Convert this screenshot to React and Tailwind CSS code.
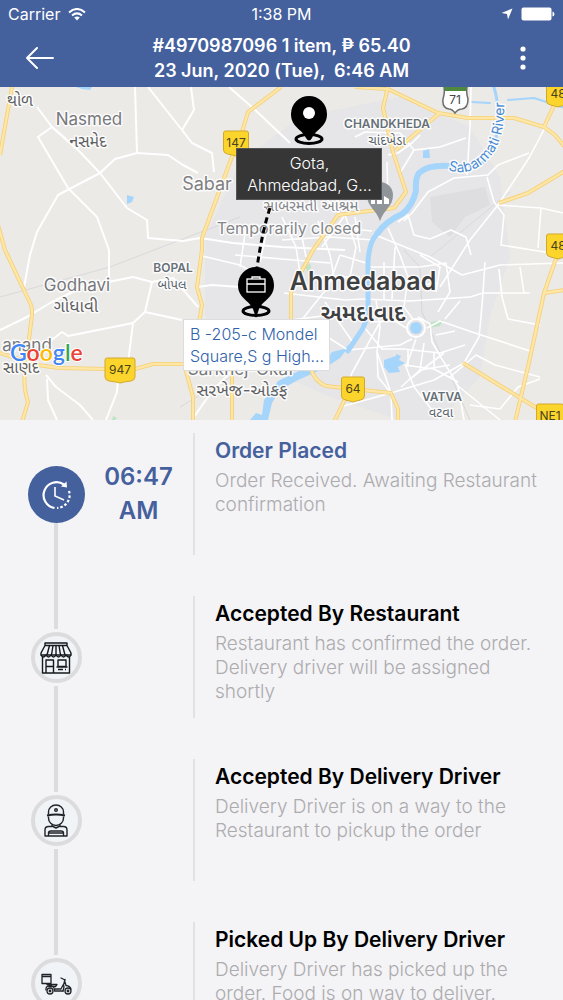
import React from "react";

const FONT = "font-['Inter','Noto_Sans','Liberation_Sans',sans-serif]";

const STEPS = [
  {
    title: "Order Placed",
    text: "Order Received. Awaiting Restaurant confirmation",
    time: "06:47 AM",
    icon: "clock",
    active: true,
  },
  {
    title: "Accepted By Restaurant",
    text: "Restaurant has confirmed the order. Delivery driver will be assigned shortly",
    icon: "store",
  },
  {
    title: "Accepted By Delivery Driver",
    text: "Delivery Driver is on a way to the Restaurant to pickup the order",
    icon: "driver",
  },
  {
    title: "Picked Up By Delivery Driver",
    text: "Delivery Driver has picked up the order. Food is on way to deliver.",
    icon: "scooter",
  },
];

const MINOR_ROADS = [
  "M37 20L52 40L80 65L100 86L127 121L147 133L148 151L183 154L200 151L233 156L282 160L345 163",
  "M66 52L52 40L38 50L68 101L97 130L109 163L109 190",
  "M24 200L30 168L37 145L58 108L100 86L115 72L137 66L168 68L183 78L198 86",
  "M137 66L135 0",
  "M148 0L182 43L192 56L212 66L214 85",
  "M191 0L194 23L182 43",
  "M229 0L253 21L290 56",
  "M0 243L27 230L50 216L83 200L113 194L133 190L152 195L145 225L133 236L128 276",
  "M45 258L62 245L68 249L133 236M145 225L182 233",
  "M152 195L173 191L198 220M197 200L212 198L240 200",
  "M46 288L56 300L80 318L93 333M47 292L48 313L57 333",
  "M118 290L117 305L106 333M232 284L212 304L194 330",
];

const CITY_ROADS = [
  "M471 0L470 40L467 88M548 35L529 71L498 118L470 153L440 200",
  "M404 134L412 126L428 105L454 91L488 88L498 78L529 66",
  "M487 90L494 115L504 128L501 158L563 168M498 118L541 121L563 126M541 121L538 161",
  "M398 135L408 128L414 148L430 152L451 143L466 150L471 168",
  "M355 50L365 45L400 46L414 63L440 60L466 51",
  "M388 68L398 66L412 56L420 48M414 63L400 86M387 75L388 112",
  "M388 141L400 168L408 190L404 220L413 232",
  "M375 148L430 170L462 188L500 178L563 176",
  "M370 180L420 180L446 176L450 205L438 225",
  "M363 212L410 214L470 210L483 206L530 206",
  "M483 206L485 175M483 206L481 230L479 250L464 276L434 293L391 306L340 320",
  "M370 235L395 234L406 241M427 241L440 234L475 246L530 264",
  "M364 240L382 262L403 262L440 266L465 258",
  "M348 263L400 258L412 252M376 213L380 240L377 265L391 306",
  "M416 252L406 280L414 300L440 333",
  "M418 230L430 237L432 255L458 299L464 333",
  "M404 278L434 282L458 295M434 282L434 266M450 290L476 268L495 278L540 290",
  "M404 228L380 235L352 286L342 310M458 299L500 333",
  "M392 333L391 306L378 290L377 265M470 318L500 322L518 300L540 292",
  "M499 182L502 210L508 232L540 238M520 180L524 206",
  "M410 292L444 266M401 300L420 283L450 278",
  "M284 206L310 209L345 213L363 212M291 233L322 229L360 222",
  "M318 244L348 263M325 215L352 254M300 235L328 200L340 168",
  "M235 168L282 172L330 176M240 180L246 140M260 175L268 138L300 140",
  "M282 130L296 160L300 186M300 140L306 170M318 134L330 168L334 190M282 153L330 150L374 153",
  "M322 160L345 128L356 160L350 190M330 140L372 144M340 168L366 176M308 190L360 190",
  "M355 130L360 165M202 169L240 178L260 190M312 100L318 125M325 110L342 130M322 75L330 105L345 122",
  "M420 168L440 180L436 205M395 160L392 212M384 175L384 212M406 200L438 196",
  "M408 262L408 280M424 256L420 283M436 248L455 244M445 232L460 214",
];

const HIGHWAYS = [
  "M12 0L0 68",
  "M-2 138L5 163L31 218Q33 224 31 236L25 283Q23 300 28 315L22 335",
  "M281 0L248 25L242 45L230 75L202 151V163L197 200L202 218L200 230L186 265L186 284L193 310V335",
  "M232 270V335",
  "M0 266L37 278L60 281L107 282L135 282L153 277L185 277",
  "M388 0L383 21L393 65L406 105L394 121L361 125L338 128L326 145L313 163L296 195L291 206L291 233",
  "M355 0L388 2L438 26L468 31L514 31L544 40L555 48L565 60M544 40L556 14M441 25L396 63",
  "M499 116L528 106L565 84",
  "M558 166L544 206L528 280L515 335M544 206L565 203",
  "M310 280Q315 295 326 299L344 301L391 306L398 322V335M345 312L334 335",
  "M463 276L540 323",
];

const LABELS = [
  { t: "થોળ", x: 20, y: 19, s: 16, c: "#5f6062" },
  { t: "Nasmed", x: 89, y: 38, s: 17, c: "#77787b" },
  { t: "નસમેદ", x: 88, y: 60, s: 16, c: "#5f6062" },
  { t: "Sabar", x: 207, y: 103, s: 18, c: "#7f8083" },
  { t: "સાબરમતી આશ્રમ", x: 311, y: 124, s: 15, c: "#85868a" },
  { t: "Temporarily closed", x: 289, y: 147, s: 16, c: "#85868a" },
  { t: "CHANDKHEDA", x: 387, y: 41, s: 12, c: "#667078", w: 600 },
  { t: "ચાંદખેડા", x: 387, y: 58, s: 13, c: "#59636b" },
  { t: "Godhavi", x: 77, y: 204, s: 17, c: "#77787b" },
  { t: "ગોધાવી", x: 76, y: 225, s: 17, c: "#5f6062" },
  { t: "BOPAL", x: 173, y: 185, s: 12, c: "#667078", w: 600 },
  { t: "બોપલ", x: 172, y: 202, s: 13, c: "#59636b" },
  { t: "anand", x: 27, y: 264, s: 17, c: "#77787b" },
  { t: "સાણંદ", x: 21, y: 286, s: 16, c: "#5f6062" },
  { t: "Sarkhej-Okaf", x: 241, y: 288, s: 17, c: "#77787b" },
  { t: "સરખેજ-ઓકફ", x: 242, y: 309, s: 17, c: "#5f6062" },
  { t: "Ahmedabad", x: 363, y: 203, s: 25, c: "#3f4042", w: 600 },
  { t: "અમદાવાદ", x: 363, y: 234, s: 23, c: "#3f4042", w: 600 },
  { t: "VATVA", x: 442, y: 314, s: 12, c: "#667078", w: 600 },
  { t: "વટવા", x: 441, y: 330, s: 13, c: "#59636b" },
];

const SHIELDS = [
  { t: "147", x: 236, y: 56, w: 25 },
  { t: "947", x: 120, y: 283, w: 30 },
  { t: "64", x: 353, y: 302, w: 23 },
  { t: "48", x: 558, y: 7, w: 23 },
  { t: "48", x: 558, y: 159, w: 23 },
  { t: "NE1", x: 550, y: 329, w: 27 },
];

const MapCanvas = () => (
  <svg
    className="block h-full w-full"
    viewBox="0 0 563 333"
    preserveAspectRatio="xMidYMid slice"
    role="img"
    aria-label="Map of Ahmedabad"
  >
    <rect width="563" height="333" fill="#ebeae7" />
    <path
      d="M240 75L300 30L400 10L470 40L500 90L510 170L490 230L480 290L440 333H400L330 310L240 270L205 230V150Z"
      fill="#e6e6e8"
    />
    <path d="M430 110L485 100L490 118L465 130L450 150L432 135Z" fill="#dedee0" />
    <path d="M404 163L420 180L422 225L440 265L470 333" fill="none" stroke="#d6d6d8" strokeWidth="1" />
    <path d="M0 210L110 180L240 130M180 320L290 255M510 105L430 170" fill="none" stroke="#d9d9da" strokeWidth="1" />
    <path d="M431 235L443 233L440 239L428 241Z" fill="#bfe3c5" />
    <path d="M305 180L310 176L311 181L308 185Z" fill="#bfe3c5" />
    <path d="M113 329L117 331L115 333H112Z" fill="#bfe3c5" />

    <g fill="#a5d5fb">
      <path d="M127 108L134 110L132 115L127 117Z" />
      <path d="M76 0H92L90 3L82 2Z" />
      <path d="M423 64L429 62L430 71L423 71Z" />
      <path d="M384 273L396 269V267L401 269L399 273L405 276L398 280L400 285L389 286L384 280Z" />
      <path d="M278 294L305 281L326 274L332 265L344 262L354 253L340 271L325 281L298 293L280 303L272 316L268 333H250L256 326L262 328L264 313L274 300Z" />
    </g>
    <g fill="none" stroke="#a5d5fb" strokeLinecap="round" strokeLinejoin="round">
      <path d="M494 0Q501 25 497 45Q494 68 478 79L448 79" strokeWidth="3" />
      <path d="M452 79Q428 77 419 86Q415 92 416 104Q412 120 402 127Q386 134 377 147" strokeWidth="6" />
      <path d="M471 15L490 16M508 13L534 11L565 21" strokeWidth="2" />
    </g>

    <g fill="none" stroke="#ffffff" strokeLinejoin="round">
      {MINOR_ROADS.map((d) => (
        <path key={d} d={d} strokeWidth="2" />
      ))}
      {CITY_ROADS.map((d) => (
        <path key={d} d={d} strokeWidth="1.6" />
      ))}
    </g>
    <path
      d="M377 147Q369 155 368 175V210Q369 228 363 241L348 264"
      fill="none"
      stroke="#a5d5fb"
      strokeWidth="5"
      strokeLinecap="round"
    />
    <circle cx="416" cy="241" r="9" fill="#e6e6e8" stroke="#fff" strokeWidth="2" />
    <circle cx="416" cy="241" r="6" fill="#a5d5fb" />

    <g fill="none" strokeLinejoin="round">
      {HIGHWAYS.map((d) => (
        <path key={d} d={d} stroke="#f5cf75" strokeWidth="4" />
      ))}
      {HIGHWAYS.map((d) => (
        <path key={d} d={d} stroke="#fde6a6" strokeWidth="2.4" />
      ))}
    </g>

    {/* ashram poi pin */}
    <path d="M380 134C376 122 367 120 367 108A13 13 0 0 1 393 108C393 120 384 122 380 134Z" fill="#8f9599" />
    <path d="M371 117V110L375 112V117ZM377 117V108L382 110V117ZM384 117V109L389 112V117Z" fill="#fff" />

    <g
      className="[paint-order:stroke] font-['Inter','Noto_Sans','Noto_Sans_Gujarati',sans-serif]"
      textAnchor="middle"
      stroke="#ffffff"
      strokeWidth="3"
      strokeLinejoin="round"
      strokeOpacity="0.85"
    >
      {LABELS.map((l) => (
        <text key={l.t} x={l.x} y={l.y} fontSize={l.s} fill={l.c} fontWeight={l.w || 400}>
          {l.t}
        </text>
      ))}
      <path id="river" d="M448 83Q468 90 485 75Q502 60 504 30L505 -6" fill="none" stroke="none" />
      <text fontSize="14" fill="#4a8ad0" textAnchor="start">
        <textPath href="#river">Sabarmati River</textPath>
      </text>
    </g>

    <g className="font-['Inter','Liberation_Sans',sans-serif]" textAnchor="middle" fontSize="12">
      {SHIELDS.map((s) => (
        <g key={`${s.t}-${s.y}`} transform={`translate(${s.x} ${s.y})`}>
          <path
            d={`M${-s.w / 2} -10Q${-s.w / 2} -12 ${-s.w / 2 + 2} -12H${s.w / 2 - 2}Q${s.w / 2} -12 ${s.w / 2} -10V7Q${s.w / 2} 10 ${s.w / 2 - 4} 11Q3 12 0 13Q-3 12 ${-s.w / 2 + 4} 11Q${-s.w / 2} 10 ${-s.w / 2} 7Z`}
            fill="#fbd52b"
            stroke="#d3a92c"
          />
          <text y="4" fill="#4b421f">
            {s.t}
          </text>
        </g>
      ))}
      <path
        d="M444 0H467Q466 6 468 12Q468 21 462 22Q458 22 455 26Q452 22 449 22Q442 21 443 12Q445 6 444 0Z"
        fill="#fff"
        stroke="#6d6d6d"
        strokeWidth="1.5"
      />
      <path d="M444 0H467L466 4H445Z" fill="#4d8a3d" />
      <text x="455" y="17" fill="#444">
        71
      </text>
    </g>

    <path d="M270 121Q262 145 257 181" fill="none" stroke="#000" strokeWidth="3" strokeDasharray="6 4" />
    <g>
      <ellipse cx="309" cy="52" rx="13" ry="4.500" fill="none" stroke="#000" strokeWidth="3" />
      <path d="M309 9A18 18 0 0 1 327 27C327 40 316 42 312 51Q309 56 306 51C302 42 291 40 291 27A18 18 0 0 1 309 9Z" />
      <circle cx="309" cy="26" r="6" fill="#fff" />
    </g>
    <g>
      <ellipse cx="256" cy="224" rx="13" ry="4.500" fill="none" stroke="#000" strokeWidth="3" />
      <path d="M256 180A18 18 0 0 1 274 198C274 211 263 213 259 222L256 231L253 222C249 213 238 211 238 198A18 18 0 0 1 256 180Z" />
      <g fill="none" stroke="#fff" strokeWidth="1.300">
        <rect x="247" y="192" width="18" height="13" />
        <path d="M247 197H265M252 192V190H260V192" />
      </g>
    </g>

    <text
      x="10"
      y="274"
      fontSize="23"
      fontWeight="600"
      stroke="#fff"
      strokeWidth="2"
      className="[paint-order:stroke] font-['Lato','Inter',sans-serif]"
    >
      <tspan fill="#4285f4">G</tspan>
      <tspan fill="#ea4335">o</tspan>
      <tspan fill="#fbbc05">o</tspan>
      <tspan fill="#4285f4">g</tspan>
      <tspan fill="#34a853">l</tspan>
      <tspan fill="#ea4335">e</tspan>
    </text>
  </svg>
);

const StatusBar = () => (
  <div className="grid h-7 grid-cols-3 items-center px-2 text-base">
    <div className="flex items-center gap-2">
      <span>Carrier</span>
      <svg width="18" height="13" viewBox="0 0 18 13" fill="none" stroke="#fff" strokeWidth="2">
        <path d="M1 4.500Q9 -2.500 17 4.500M4 7.500Q9 3.200 14 7.500" />
        <path d="M9 12.500L6.200 9.600Q9 7.400 11.800 9.600Z" fill="#fff" stroke="none" />
      </svg>
    </div>
    <span className="text-center">1:38 PM</span>
    <div className="flex items-center justify-end gap-2">
      <svg width="12" height="12" viewBox="0 0 12 12" fill="#fff">
        <path d="M11.500 0.500L7 11.500L6 6L0.500 5Z" />
      </svg>
      <svg width="34" height="14" viewBox="0 0 34 14" fill="#fff">
        <rect x="0.500" y="0.500" width="30" height="13" rx="2" />
        <path d="M31.500 4.500Q33.500 5 33.500 7Q33.500 9 31.500 9.500Z" />
      </svg>
    </div>
  </div>
);

const Header = () => (
  <header className="shrink-0 bg-[#44609d] text-white">
    <StatusBar />
    <div className="flex h-[59px] items-center justify-between px-6">
      <button type="button" aria-label="Back" className="flex h-8 w-8 items-center justify-center">
        <svg width="28" height="22" viewBox="0 0 28 22" fill="none" stroke="#fff" strokeWidth="2" strokeLinecap="round" strokeLinejoin="round">
          <path d="M27 11H1M11 1L1 11L11 21" />
        </svg>
      </button>
      <h1 className="text-center text-lg leading-[25px] font-semibold whitespace-pre">
        #4970987096 1 item, ₱ 65.40
        <br />
        {"23 Jun, 2020 (Tue),  6:46 AM"}
      </h1>
      <button type="button" aria-label="More options" className="flex h-8 w-8 items-center justify-center">
        <svg width="6" height="24" viewBox="0 0 6 24" fill="#fff">
          <circle cx="3" cy="3" r="2.600" />
          <circle cx="3" cy="12" r="2.600" />
          <circle cx="3" cy="21" r="2.600" />
        </svg>
      </button>
    </div>
  </header>
);

const StepIcon = ({ name }) => {
  if (name === "clock") {
    return (
      <svg width="30" height="30" viewBox="0 0 30 30" fill="none" stroke="#fff" strokeWidth="2.200">
        <path d="M13.500 28A13 13 0 1 1 23 4.500" />
        <path d="M25.500 1.500L26 7.500L20 6.500Z" fill="#fff" stroke="none" />
        <path d="M14 7V16L23 20" strokeWidth="1.600" />
        <path d="M28 11A13 13 0 0 1 16 28" strokeDasharray="2.500 2" />
      </svg>
    );
  }
  if (name === "store") {
    return (
      <svg width="32" height="32" viewBox="0 0 32 32" fill="none" stroke="#15181c" strokeWidth="1.400" strokeLinejoin="round">
        <path d="M5 1H27V3.500H5ZM5 3.500L1 11V13H31V11L27 3.500" />
        <path d="M9.500 3.500L7 13M13 3.500L11.500 13M16 3.500V13M19 3.500L20.500 13M22.500 3.500L25 13" />
        <path d="M1 13Q3 17 6 13Q8.500 17 11 13Q13.500 17 16 13Q18.500 17 21 13Q23.500 17 26 13Q29 17 31 13" />
        <path d="M2.500 15V31H29.500V15M6 31V18H13.500V31M6 24.500H13.500" />
        <path d="M18 18H26V24.500H18ZM16.500 25H27.500" />
        <path d="M18 27.500H23M25 27.500H26" />
      </svg>
    );
  }
  if (name === "driver") {
    return (
      <svg width="24" height="33" viewBox="0 0 24 33" fill="none" stroke="#20242a" strokeWidth="1.400" strokeLinejoin="round">
        <path d="M4.500 10.500V8A7.500 7 0 0 1 19.500 8V10.500" />
        <path d="M3 11.500Q12 9.500 21 11.500" strokeWidth="2" />
        <path d="M4.500 12.500V14A7.500 7.500 0 0 0 19.500 14V12.500" />
        <circle cx="12" cy="6" r="1.300" />
        <path d="M8 20.500V22L12 24L16 22V20.500" />
        <path d="M8 22.500H4.500Q1 22.500 1 26V32H23V26Q23 22.500 19.500 22.500H16" />
        <path d="M4.500 32V29Q4.500 27 7 27H17Q19.500 27 19.500 29V32M5 29H19" />
      </svg>
    );
  }
  return (
    <svg width="31" height="22" viewBox="0 0 31 22" fill="none" stroke="#20242a" strokeWidth="1.300" strokeLinejoin="round" strokeLinecap="round">
      <path d="M1 1.500H10V10.500H1ZM1 3.500H10" />
      <path d="M6 11.500H16L14.500 13.500H8M5 17V15Q6 12.500 9 13H11Q13.500 14 13.500 18H22" />
      <circle cx="9" cy="18" r="3" />
      <circle cx="9" cy="18" r="0.800" />
      <circle cx="27" cy="18" r="3" />
      <circle cx="27" cy="18" r="0.800" />
      <path d="M20 5L23 6.500L24 7.500M24 6.500L22.500 12L23 14L22 18M14 16H20L22 12M24 9L25 12.500Q29 13 30 16" />
    </svg>
  );
};

const Step = ({ step, first }) => (
  <li className="flex min-h-[163px] pr-4 pl-7">
    <div className="flex w-14 shrink-0 flex-col items-center">
      <div className={first ? "h-[33px]" : "h-[33px] w-1 bg-[#dcdcdf]"} />
      <div
        className={
          step.active
            ? "flex h-[57px] w-[57px] items-center justify-center rounded-full bg-[#44609d]"
            : "flex h-[57px] w-[57px] items-center justify-center rounded-full"
        }
      >
        {step.active ? (
          <StepIcon name={step.icon} />
        ) : (
          <div className="flex h-[51px] w-[51px] items-center justify-center rounded-full border-4 border-[#dcdcdf] bg-[#f1f4f6]">
            <StepIcon name={step.icon} />
          </div>
        )}
      </div>
      <div className="w-1 flex-1 bg-[#dcdcdf]" />
    </div>
    <div className="flex h-[122px] w-[109px] shrink-0 items-center justify-center px-4">
      {step.time && (
        <time className="text-center text-[24px] leading-[34px] font-semibold text-[#44609d]">{step.time}</time>
      )}
    </div>
    <div className="mb-[41px] flex-1 border-l-2 border-[#e2e2e5] pt-1 pl-5">
      <h2
        className={
          step.active
            ? "text-[21px] leading-7 font-semibold text-[#44609d]"
            : "text-[21px] leading-7 font-semibold text-black"
        }
      >
        {step.title}
      </h2>
      <p className="pt-1 text-[19px] leading-6 font-light text-[#acacae]">{step.text}</p>
    </div>
  </li>
);

const App = () => {
  return (
    <div className={`flex h-screen flex-col overflow-hidden bg-[#f4f3f6] ${FONT}`}>
      <Header />

      <section className="relative h-[333px] shrink-0 overflow-hidden">
        <MapCanvas />
        {/* Address callouts */}
        <div className="absolute top-[61px] left-[42%] w-[146px] border border-[#555] bg-[#363636] px-1 py-[3px] text-center text-base leading-[22px] font-light text-white">
          Gota,
          <br />
          Ahmedabad, G...
        </div>
        <div className="absolute top-[232px] left-[32.5%] w-[147px] border border-[#ddd] bg-white px-1.5 py-[3px] text-base leading-[22px] font-light whitespace-nowrap text-[#2f62aa]">
          B -205-c Mondel
          <br />
          Square,S g High...
        </div>
      </section>

      <ol className="min-h-0 flex-1 overflow-y-auto pt-[13px] [scrollbar-width:none]">
        {STEPS.map((step, i) => (
          <Step key={step.title} step={step} first={i === 0} />
        ))}
      </ol>
    </div>
  );
};

export default App;
